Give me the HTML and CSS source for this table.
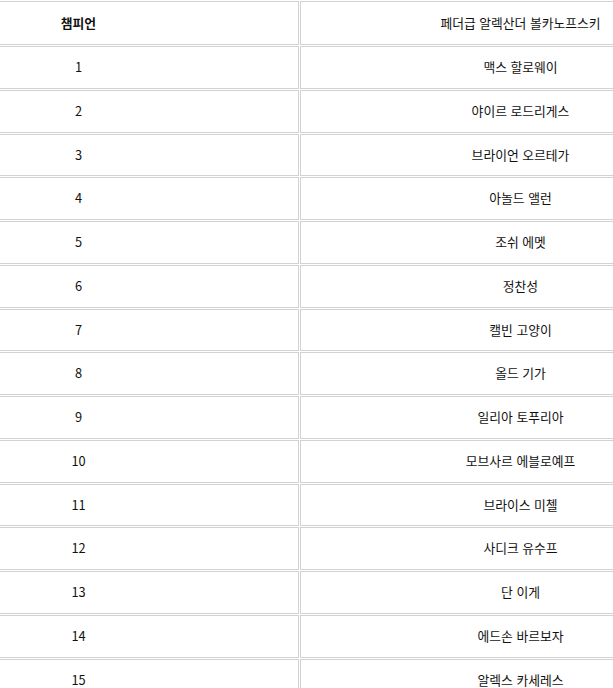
FILE: index.html
```html
<!DOCTYPE html>
<html lang="ko">
<head>
<meta charset="utf-8">
<title>챔피언</title>
<link rel="stylesheet" href="styles.css">
</head>
<body>
<div class="frame">
<table class="champ-table">
  <thead>
    <tr>
      <th class="col-head col-bold">챔피언</th>
      <th class="col-head">페더급 알렉산더 볼카노프스키</th>
    </tr>
  </thead>
  <tbody>
    <tr><td>1</td><td>맥스 할로웨이</td></tr>
    <tr><td>2</td><td>야이르 로드리게스</td></tr>
    <tr><td>3</td><td>브라이언 오르테가</td></tr>
    <tr><td>4</td><td>아놀드 앨런</td></tr>
    <tr><td>5</td><td>조쉬 에멧</td></tr>
    <tr><td>6</td><td>정찬성</td></tr>
    <tr><td>7</td><td>캘빈 고양이</td></tr>
    <tr><td>8</td><td>올드 기가</td></tr>
    <tr><td>9</td><td>일리아 토푸리아</td></tr>
    <tr><td>10</td><td>모브사르 에블로예프</td></tr>
    <tr><td>11</td><td>브라이스 미첼</td></tr>
    <tr><td>12</td><td>사디크 유수프</td></tr>
    <tr><td>13</td><td>단 이게</td></tr>
    <tr><td>14</td><td>에드손 바르보자</td></tr>
    <tr><td>15</td><td>알렉스 카세레스</td></tr>
  </tbody>
</table>
</div>
</body>
</html>
```

FILE: styles.css
```css
html, body {
  margin: 0;
  padding: 0;
  background: #ffffff;
}

body {
  font-family: "Noto Sans CJK KR", "Noto Sans", sans-serif;
  font-size: 12.8px;
  color: #111111;
}

.frame {
  width: 613px;
  height: 688px;
  overflow: hidden;
}

.champ-table {
  margin-left: -143px;
  border-collapse: separate;
  border-spacing: 1px;
  table-layout: fixed;
  width: 885px;
}

.champ-table th,
.champ-table td {
  box-sizing: border-box;
  width: 441px;
  border: 1px solid #d2d2d2;
  text-align: center;
  vertical-align: middle;
  padding: 0;
  line-height: 40.75px;
  height: 42.75px;
}

.champ-table th {
  height: 44px;
  line-height: 42px;
  font-weight: normal;
}

.champ-table .col-bold {
  font-weight: bold;
}
```
